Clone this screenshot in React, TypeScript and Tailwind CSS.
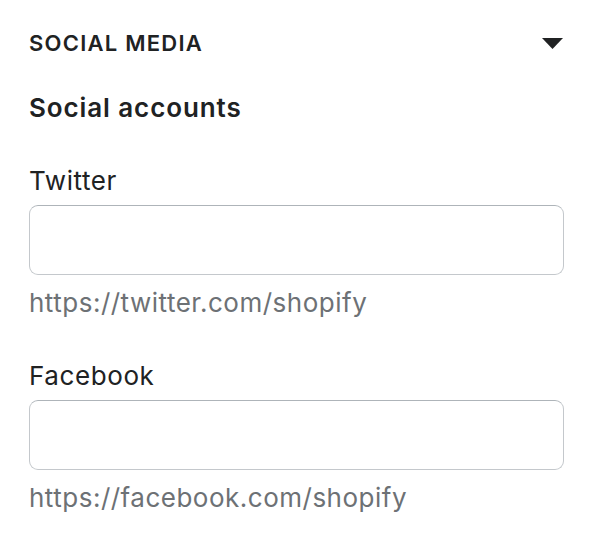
const fields = [
  { label: "Twitter", hint: "https://twitter.com/shopify" },
  { label: "Facebook", hint: "https://facebook.com/shopify" },
];

export default function App() {
  return (
    <div className="min-h-[558px] w-[596px] bg-white pl-[29px] pr-[32px] pt-[27px] font-['Inter',sans-serif] text-[#202223]">
      <div className="flex h-[32px] items-center justify-between">
        <h2 className="text-[22px] font-semibold tracking-[1.25px] leading-[32px]">SOCIAL MEDIA</h2>
        <svg width="21" height="11" viewBox="0 0 21 11" className="mr-[1px]">
          <path d="M0 0 L21 0 L10.5 11 Z" fill="#202223" />
        </svg>
      </div>
      <h3 className="mt-[31px] text-[26px] font-semibold tracking-[0.9px] leading-[36px]">Social accounts</h3>
      {fields.map((f) => (
        <div key={f.label} className="mt-[37px]">
          <label className="block text-[26px] tracking-[0.6px] leading-[36px]">{f.label}</label>
          <input
            type="text"
            className="mt-[6px] block h-[70px] w-full rounded-[9px] border border-[#c4c8cc] border-t-[#aeb4b9] bg-white px-4 text-[26px] outline-none"
          />
          <p className="mt-[10px] text-[26px] tracking-[0.5px] leading-[36px] text-[#6d7175]">{f.hint}</p>
        </div>
      ))}
    </div>
  );
}
